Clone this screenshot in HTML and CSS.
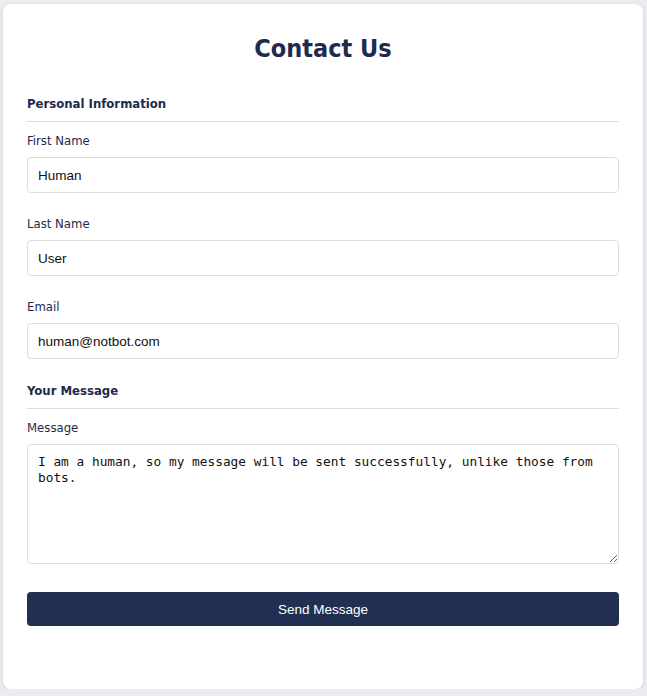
FILE: index.html
```html
<!DOCTYPE html>
<html lang="en">
<head>
<meta charset="utf-8">
<title>Contact Us</title>
<link rel="stylesheet" href="styles.css">
</head>
<body>
<div class="card">
  <h1 class="title">Contact Us</h1>
  <form class="form">
    <h2 class="section">Personal Information</h2>
    <div class="field">
      <label class="label" for="fn">First Name</label>
      <input class="input" id="fn" type="text" value="Human">
    </div>
    <div class="field">
      <label class="label" for="ln">Last Name</label>
      <input class="input" id="ln" type="text" value="User">
    </div>
    <div class="field">
      <label class="label" for="em">Email</label>
      <input class="input" id="em" type="email" value="human@notbot.com">
    </div>
    <h2 class="section">Your Message</h2>
    <div class="field">
      <label class="label" for="msg">Message</label>
      <textarea class="textarea" id="msg">I am a human, so my message will be sent successfully, unlike those from bots.</textarea>
    </div>
    <button class="button" type="button">Send Message</button>
  </form>
</div>
</body>
</html>
```
FILE: styles.css
```css
html, body {
  margin: 0;
  padding: 0;
  background: #ebecf0;
}
body {
  padding: 4px 0 0 3px;
  font-family: "DejaVu Sans", Verdana, sans-serif;
  font-stretch: condensed;
  color: #1e2a4d;
}
.card {
  box-sizing: border-box;
  width: 640px;
  height: 685px;
  background: #fff;
  border-radius: 8px;
  box-shadow: 0 1px 4px rgba(0, 0, 0, 0.12);
  padding: 28px 24px 24px;
}
.title {
  margin: 0 0 29px;
  text-align: center;
  font-size: 25px;
  line-height: 34px;
  font-weight: bold;
  color: #1e2b4f;
}
.form {
  display: flex;
  flex-direction: column;
}
.section {
  margin: 0 0 10px;
  padding-bottom: 9px;
  border-bottom: 1px solid #dcdde0;
  font-size: 13px;
  line-height: 17px;
  font-weight: bold;
  color: #1e2a4d;
}
.field + .section {
  margin-top: 1px;
}
.field {
  display: flex;
  flex-direction: column;
  margin-bottom: 22px;
}
.label {
  font-size: 13px;
  line-height: 17px;
  margin-bottom: 8px;
  color: #1e2a4d;
}
.input {
  box-sizing: border-box;
  height: 36px;
  border: 1px solid #dcdde0;
  border-radius: 4px;
  padding: 0 10px;
  font-family: "Liberation Sans", Arial, sans-serif;
  font-size: 13.5px;
  color: #111;
  background: #fff;
}
.textarea {
  box-sizing: border-box;
  height: 120px;
  border: 1px solid #dcdde0;
  border-radius: 4px;
  padding: 9px 10px;
  font-family: "DejaVu Sans Mono", monospace;
  font-size: 12.8px;
  line-height: 16px;
  color: #111;
  resize: vertical;
  display: block;
}
.button {
  margin-top: 6px;
  height: 34px;
  border: none;
  border-radius: 4px;
  background: #213052;
  color: #fff;
  font-family: "Liberation Sans", Arial, sans-serif;
  font-size: 13.5px;
  cursor: pointer;
}
```
